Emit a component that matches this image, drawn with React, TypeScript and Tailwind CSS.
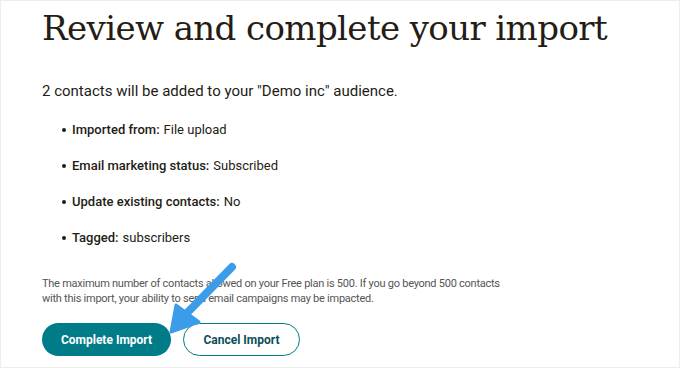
import React from 'react';

const items = [
  { label: 'Imported from:', value: 'File upload' },
  { label: 'Email marketing status:', value: 'Subscribed' },
  { label: 'Update existing contacts:', value: 'No' },
  { label: 'Tagged:', value: 'subscribers' },
];

const Arrow = () => (
  <svg
    className="absolute left-0 top-0 pointer-events-none"
    width="680"
    height="368"
    viewBox="0 0 680 368"
  >
    <line x1="231" y1="266" x2="186" y2="312" stroke="#3b9de9" strokeWidth="8" strokeLinecap="round" />
    <path d="M170 331 L175 304 L198 321 Z" fill="#3b9de9" stroke="#3b9de9" strokeWidth="3" strokeLinejoin="round" />
  </svg>
);

export default function App() {
  return (
    <div className="relative w-[680px] h-[368px] overflow-hidden bg-white border border-[#ededed] pl-[41px] font-['Roboto',sans-serif] text-[#241c15]">
      <h1 className="mt-[6px] font-['DejaVu_Serif',serif] text-[34px] leading-[42px] font-normal tracking-[-0.6px]">
        Review and complete your import
      </h1>
      <p className="mt-[32px] text-[15px] leading-[20px]">
        2 contacts will be added to your "Demo inc" audience.
      </p>
      <ul className="mt-[21px] flex flex-col gap-[20px] pl-[20px]">
        {items.map((it) => (
          <li key={it.label} className="flex items-center text-[13px] leading-[16px]">
            <span className="w-[4px] h-[4px] rounded-full bg-[#241c15] mr-[6px]" />
            <span className="font-medium">{it.label}</span>
            <span className="ml-[4px]">{it.value}</span>
          </li>
        ))}
      </ul>
      <p className="mt-[30px] w-[462px] text-[11px] leading-[15px] tracking-[-0.25px] text-[#555]">
        The maximum number of contacts allowed on your Free plan is 500. If you go beyond 500 contacts with this import, your ability to send email campaigns may be impacted.
      </p>
      <div className="mt-[17px] flex gap-[12px]">
        <button className="h-[33px] w-[129px] rounded-full bg-[#007c89] text-white text-[12px] font-bold">
          Complete Import
        </button>
        <button className="h-[33px] w-[117px] rounded-full border border-[#007c89] bg-white text-[#0b4f57] text-[12px] font-bold">
          Cancel Import
        </button>
      </div>
      <Arrow />
    </div>
  );
}
